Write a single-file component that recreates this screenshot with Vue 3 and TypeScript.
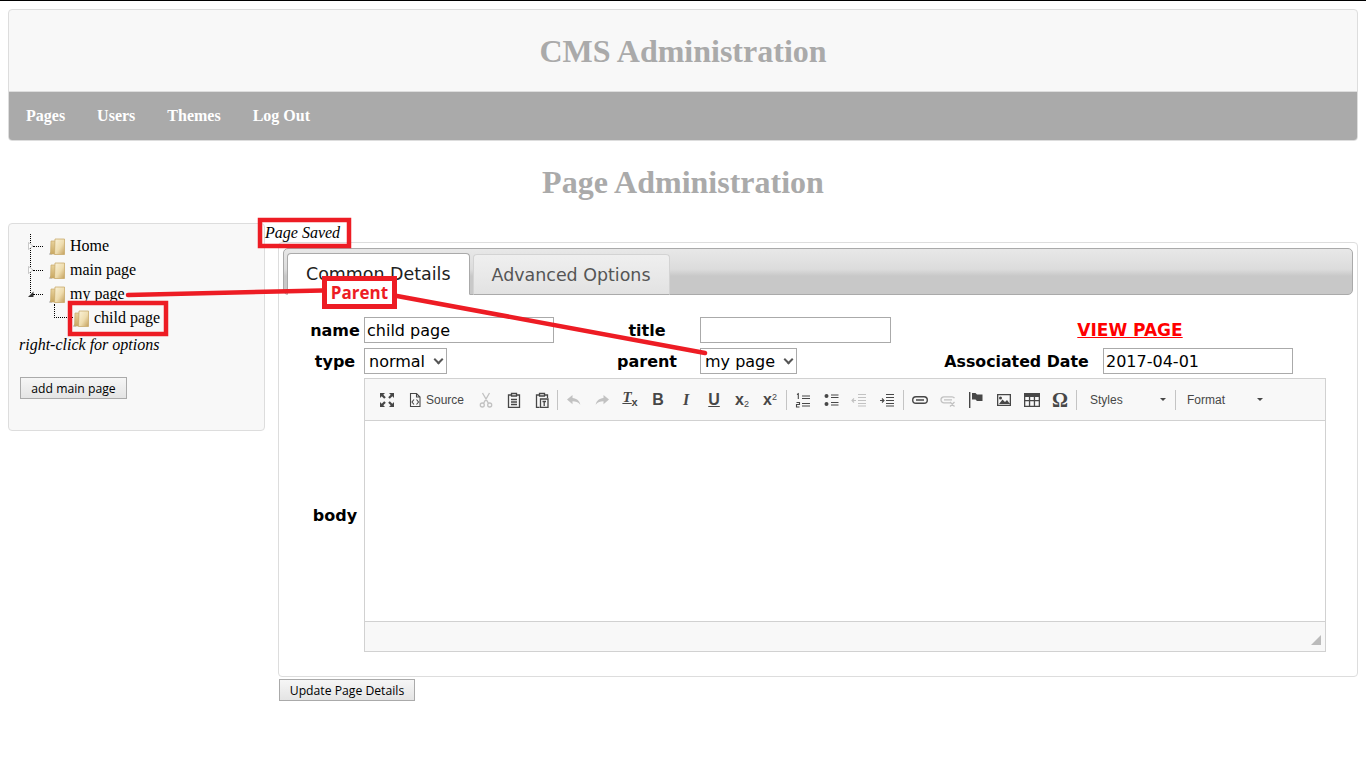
<script setup lang="ts">
interface Ic { f?: string; s?: string; t?: string; sub?: string; sup?: string; cls?: string; off?: boolean; label?: string }
const tools: (Ic | 'sep' | 'sep4' | string)[] = [
  { f: 'M1 1h5L4.3 2.7l2.5 2.5-1.6 1.6-2.5-2.5L1 6zM15 1v5l-1.7-1.7-2.5 2.5-1.6-1.6 2.5-2.5L10 1zM1 15v-5l1.7 1.700 2.500-2.500 1.600 1.600-2.500 2.500L6 15zM15 15h-5l1.700-1.700-2.500-2.500 1.600-1.600 2.500 2.500L15 10z' },
  { s: 'M3.500 1.500h6l3.500 3.500v9.500h-9.500zM9.500 1.500v3.500H13M7 7.500 5 10l2 2.500M9.500 7.500l2 2.500-2 2.500', label: 'Source' },
  { s: 'M5.800 10.800 11.500 1M10.200 10.800 4.500 1M6.300 13a2 2 0 1 1-4 0 2 2 0 0 1 4 0zM13.700 13a2 2 0 1 1-4 0 2 2 0 0 1 4 0z', off: true, cls: 'thick' },
  { s: 'M5 3H2.500v12.500h11V3H11M5.500 1.500h5V4h-5zM5 7.500h6M5 10h6M5 12.500h6', cls: 'thick' },
  { s: 'M5 3H2.500v12.500h3M11 3h2.500v3M5.500 1.500h5V4h-5zM6.500 7h7.500v8.500H6.500zM8.500 9.500h3.500M10.200 9.500v4.500', cls: 'thick' },
  'sep4',
  { f: 'M6.500 3 1 7.600l5.500 4.600V9.300c3.300 0 5.800.7 7.800 3.400C13.600 8.700 10.700 6.400 6.500 6z', off: true },
  { f: 'M9.500 3 15 7.600 9.500 12.200V9.300c-3.300 0-5.800.7-7.800 3.400C2.400 8.700 5.300 6.400 9.500 6z', off: true },
  { t: 'T', sub: 'x', cls: 'tclear' },
  { t: 'B', cls: 'tb' },
  { t: 'I', cls: 'ti' },
  { t: 'U', cls: 'tu' },
  { t: 'x', sub: '2', cls: 'tx' },
  { t: 'x', sup: '2', cls: 'tx' },
  'sep',
  { s: 'M7 4h8M7 6.500h8M7 11.500h8M7 14h8M2 2.500l1.300-.8V7M1.500 10.500h3v2h-3V15h3' },
  { f: 'M1.500 4a2 2 0 1 1 4 0 2 2 0 0 1-4 0zM1.500 12a2 2 0 1 1 4 0 2 2 0 0 1-4 0z', s: 'M8 3h7.500M8 5.500h7.500M8 10.500h7.500M8 13h7.500' },
  { s: 'M7 2.500h8M7 5.500h8M7 8.500h8M7 11.500h8M7 14h8M1 8.500h4M3 6.500 1 8.500l2 2', off: true },
  { s: 'M7 2.500h8M7 5.500h8M7 8.500h8M7 11.500h8M7 14h8M1 8.500h4M3 6.500l2 2-2 2' },
  'sep',
  { s: 'M5 4.700H4a3.300 3.300 0 0 0 0 6.600h8a3.300 3.300 0 0 0 0-6.600H5zM4 8h8', cls: 'thick2' },
  { s: 'M11 10.800H4a3 3 0 0 1 0-6h8a3 3 0 0 1 2.500 1.300M4 7.800h8M10 10l4.500 4.500M14.500 10 10 14.500', off: true, cls: 'thick' },
  { f: 'M1 0h1.400v16H1zM4 1h3.500L9 2.500h5.500V9H9L7.500 7.500H4z' },
  { f: 'M1 2h14v12H1zm1.300 1.300v9.400h11.400V3.300zM3 12l3.500-4.500L9 10l2-2 3 4zM4.500 4.500a1.500 1.500 0 1 1 0 3 1.500 1.500 0 0 1 0-3z' },
  { f: 'M0 1h16v14H0zm1.300 4v3h3.600V5zm4.900 0v3h3.600V5zm4.900 0v3h3.600V5zM1.300 9.300v4.400h3.600V9.300zm4.900 0v4.400h3.600V9.300zm4.900 0v4.400h3.600V9.300z' },
  { t: 'Ω', cls: 'tomega' },
  'sep',
  'Styles',
  'sep',
  'Format'
]
const isSep = (t: unknown) => t === 'sep' || t === 'sep4'
const isCombo = (t: unknown) => typeof t === 'string' && !isSep(t)
const tree = [
  { name: 'Home', arrow: 'open' },
  { name: 'main page', arrow: 'open' },
  { name: 'my page', arrow: 'down' }
]
</script>

<template>
  <div class="page">
    <header class="head">
      <h1 class="brand">CMS Administration</h1>
      <nav class="nav">
        <a>Pages</a><a>Users</a><a>Themes</a><a>Log Out</a>
      </nav>
    </header>
    <h2 class="title">Page Administration</h2>

    <div class="cols">
      <aside class="side">
        <svg class="defs" width="0" height="0">
          <defs>
            <linearGradient id="fg" x1="0" y1="0" x2="1" y2="1">
              <stop offset="0" stop-color="#fbf3da" />
              <stop offset=".55" stop-color="#eedcae" />
              <stop offset="1" stop-color="#c39f5c" />
            </linearGradient>
            <linearGradient id="fl" x1="0" y1="0" x2="0" y2="1">
              <stop offset="0" stop-color="#e8d29c" />
              <stop offset="1" stop-color="#c9a862" />
            </linearGradient>
            <g id="fold">
              <path d="M0 16.500 1.500 14 3 16.500z" fill="#9a9a9a" />
              <path d="M2 3h5v13H1.500z" fill="url(#fl)" stroke="#c9ab6c" stroke-width=".7" />
              <path d="M6 1h9.500v15.500H5.500z" fill="url(#fg)" stroke="#c9ab6c" stroke-width=".8" />
            </g>
          </defs>
        </svg>
        <ul class="tree">
          <li v-for="n in tree" :key="n.name" class="node">
            <svg class="arrow" viewBox="0 0 6 8" :class="n.arrow">
              <path v-if="n.arrow === 'open'" d="M.5.5 5 4 .5 7.500z" fill="#fff" stroke="#bbb" stroke-width=".8" />
              <path v-else d="M0 7 5.500 1.500V7z" fill="#333" />
            </svg>
            <span class="dash"></span>
            <svg class="folder" viewBox="0 0 17 17"><use href="#fold" /></svg>
            <span>{{ n.name }}</span>
          </li>
          <li class="node child">
            <span class="elbow"></span>
            <svg class="folder" viewBox="0 0 17 17"><use href="#fold" /></svg>
            <span>child page</span>
          </li>
        </ul>
        <p class="hint">right-click for options</p>
        <button class="btn add">add main page</button>
      </aside>

      <main class="main">
        <em class="saved">Page Saved</em>
        <section class="panel">
          <div class="tabs">
            <a class="tab on">Common Details</a>
            <a class="tab">Advanced Options</a>
          </div>
          <form class="form" @submit.prevent>
            <label class="lbl">name</label>
            <div><input class="field nm" value="child page" /></div>
            <label class="lbl">title</label>
            <div><input class="field ttl" /></div>
            <a class="view">VIEW PAGE</a>

            <label class="lbl">type</label>
            <div class="selwrap w1"><select class="field sel"><option>normal</option></select></div>
            <label class="lbl">parent</label>
            <div class="selwrap w2"><select class="field sel"><option>my page</option></select></div>
            <label class="lbl assoc">Associated Date</label>
            <div><input class="field dt" value="2017-04-01" /></div>

            <label class="lbl bodylbl">body</label>
            <div class="editor">
              <div class="toolbar">
                <template v-for="(t, i) in tools" :key="i">
                  <span v-if="isSep(t)" class="sep" :class="t"></span>
                  <span v-else-if="isCombo(t)" class="combo" :class="t">
                    <span>{{ t }}</span><i class="caret"></i>
                  </span>
                  <span v-else class="tool" :class="[{ off: (t as Ic).off }, (t as Ic).t ? '' : (t as Ic).cls]">
                    <svg v-if="!(t as Ic).t" class="ico" viewBox="0 0 16 16">
                      <path v-if="(t as Ic).f" :d="(t as Ic).f" fill="#474747" />
                      <path v-if="(t as Ic).s" :d="(t as Ic).s" fill="none" stroke="#474747" />
                    </svg>
                    <span v-else class="glyph" :class="(t as Ic).cls">{{ (t as Ic).t }}<sub v-if="(t as Ic).sub">{{ (t as Ic).sub }}</sub><sup v-if="(t as Ic).sup">{{ (t as Ic).sup }}</sup></span>
                    <span v-if="(t as Ic).label" class="tlabel">{{ (t as Ic).label }}</span>
                  </span>
                </template>
              </div>
              <div class="content"></div>
              <div class="foot"><i class="grip"></i></div>
            </div>
          </form>
        </section>
        <button class="btn upd">Update Page Details</button>
      </main>
    </div>

    <svg class="marks" width="1366" height="768" viewBox="0 0 1366 768">
      <path d="M128 295 322 290.500M397 296 705 353" fill="none" stroke="#ed1c24" stroke-width="4.500" stroke-linecap="round" />
      <rect x="260" y="220" width="89" height="26" fill="none" stroke="#ed1c24" stroke-width="4.500" />
      <rect x="70" y="303" width="96" height="31" fill="none" stroke="#ed1c24" stroke-width="4.500" />
    </svg>
    <span class="parent-tag">Parent</span>
  </div>
</template>

<style>
html, body { margin: 0; background: #fff; }
</style>

<style scoped>
.page { position: relative; width: 1366px; height: 768px; overflow: hidden; box-sizing: border-box; border-top: 1px solid #000; padding: 8px 8px 0; font-family: "Liberation Serif", serif; color: #000; }
.head { border: 1px solid #ddd; border-radius: 4px; background: #f8f8f8; box-sizing: border-box; width: 1350px; height: 132px; display: flex; flex-direction: column; overflow: hidden; }
.brand { margin: 0; height: 81px; line-height: 82px; text-align: center; font-size: 32px; font-weight: bold; color: #aaa; border-bottom: 1px solid #ddd; }
.nav { flex: 1; background: #aaa; display: flex; align-items: center; padding-left: 1px; }
.nav a { padding: 0 16px; color: #fff; font-weight: bold; font-size: 16px; }
.title { margin: 25px 0 0; height: 34px; line-height: 33px; text-align: center; font-size: 32px; font-weight: bold; color: #aaa; }
.cols { display: flex; align-items: flex-start; margin-top: 23px; }
.side { width: 257px; height: 208px; box-sizing: border-box; border: 1px solid #ddd; border-radius: 4px; background: #f8f8f8; padding: 10px 10px 0; flex: none; }
.defs { position: absolute; }
.tree { list-style: none; margin: 0; padding: 0; font-size: 16px; position: relative; }
.tree::before { content: ""; position: absolute; left: 11px; top: 0; height: 59px; border-left: 1px dotted #000; }
.node { display: flex; align-items: center; height: 24px; position: relative; }
.arrow { position: absolute; left: 9px; top: 8px; width: 6px; height: 8px; }
.dash { position: absolute; left: 14px; top: 12px; width: 10px; border-top: 1px dotted #000; }
.folder { width: 17px; height: 17px; margin: 0 4px 0 30px; flex: none; }
.child .folder { margin-left: 54px; }
.elbow { position: absolute; left: 35px; top: -2px; width: 18px; height: 13px; border-left: 1px dotted #000; border-bottom: 1px dotted #000; }
.hint { margin: 6px 0 0; font-style: italic; font-size: 16px; line-height: 18px; }
.btn { display: block; box-sizing: border-box; height: 22px; padding: 0; border: 1px solid #aaa; background: linear-gradient(#f6f6f6, #e4e4e4); font-family: "Open Sans", sans-serif; font-size: 12.200px; color: #000; }
.add { width: 107px; margin: 23px 0 0 1px; }
.upd { width: 136px; margin: 2px 0 0 1px; }
.main { margin-left: 13px; width: 1080px; flex: none; }
.saved { display: block; height: 19px; line-height: 20px; margin-left: -13px; font-size: 16px; }
.panel { box-sizing: border-box; height: 435px; border: 1px solid #ddd; border-radius: 4px; padding: 5px 4px 0; }
.tabs { box-sizing: border-box; height: 47px; border: 1px solid #aaa; border-radius: 5px; background: linear-gradient(#e8e8e8, #dcdcdc 45%, #c8c8c8 60%, #c8c8c8); padding: 5px 0 0 3px; display: flex; gap: 3px; align-items: flex-end; }
.tab { box-sizing: border-box; height: 41px; margin-bottom: -1px; padding: 0 18px; line-height: 40px; font-family: "DejaVu Sans", sans-serif; font-size: 17.450px; color: #555; border: 1px solid #d3d3d3; border-bottom-color: #aaa; border-radius: 4px 4px 0 0; background: linear-gradient(#efefef, #e9e9e9 50%, #e2e2e2); }
.tab.on { height: 42px; background: #fff; color: #212121; border-color: #aaa; border-bottom-color: #fff; }
.form { display: grid; grid-template-columns: 58px 230px 106px 240px 163px 217px; grid-template-rows: 26px 26px 274px; row-gap: 5px; margin: 22px 0 0 23px; font-family: "DejaVu Sans", sans-serif; }
.form > :nth-child(n+13) { margin-top: -1px; }
.lbl { font-weight: bold; font-size: 16px; text-align: center; line-height: 28px; white-space: nowrap; }
.assoc { font-size: 15.800px; margin-left: -10px; }
.bodylbl { align-self: center; }
.view { grid-column: 5 / span 2; text-align: center; color: #f00; font-weight: bold; font-size: 17px; line-height: 27px; text-decoration: underline; }
.field { box-sizing: border-box; height: 26px; border: 1px solid #aaa; background: #fff; font-family: "DejaVu Sans", sans-serif; font-size: 16px; color: #000; padding: 0 2px; margin: 0; display: block; border-radius: 0; }
.nm { width: 190px; }
.ttl { width: 191px; }
.dt { width: 190px; }
.selwrap { position: relative; }
.selwrap::after { content: ""; position: absolute; top: 8px; width: 5px; height: 5px; border-right: 2px solid #555; border-bottom: 2px solid #555; transform: rotate(45deg); pointer-events: none; }
.w1::after { left: 71px; }
.w2::after { left: 85px; }
.sel { appearance: none; padding: 0 0 0 4px; }
.w1 .sel { width: 83px; }
.w2 .sel { width: 97px; }
.editor { grid-column: 2 / span 5; box-sizing: border-box; width: 962px; height: 274px; border: 1px solid #d1d1d1; display: flex; flex-direction: column; }
.toolbar { height: 42px; flex: none; box-sizing: border-box; background: #f8f8f8; border-bottom: 1px solid #d1d1d1; display: flex; align-items: center; padding-left: 8px; font-family: "Liberation Sans", sans-serif; color: #474747; }
.tool { height: 28px; display: flex; align-items: center; padding: 0 6px; flex: none; min-width: 16px; justify-content: center; }
.tool.off { opacity: .3; }
.ico { width: 16px; height: 16px; flex: none; }
.ico path { stroke-width: 1.100; }
.thick .ico path { stroke-width: 1.300; }
.thick2 .ico path { stroke-width: 1.400; }
.tlabel { font-size: 12px; margin-left: 3px; margin-right: 2px; }
.sep { width: 1px; height: 20px; background: #c4c4c4; margin: 0 2px; flex: none; }
.sep4 { margin: 0 2px 0 1px; }
.combo { width: 94px; box-sizing: border-box; font-size: 12px; display: flex; align-items: center; justify-content: space-between; flex: none; }
.Styles { padding: 0 7px 0 11px; }
.Format { padding: 0 9px 0 9px; }
.caret { border-top: 3px solid #474747; border-left: 3px solid transparent; border-right: 3px solid transparent; }
.glyph { display: inline-block; width: 16px; text-align: center; line-height: 16px; font-size: 16px; white-space: nowrap; }
.tb { font-weight: bold; font-family: "Liberation Sans", sans-serif; }
.ti { font-weight: bold; font-style: italic; font-family: "Liberation Serif", serif; }
.tu { font-weight: bold; text-decoration: underline; }
.tclear { font-weight: bold; font-style: italic; font-size: 15px; text-decoration: underline; font-family: "Liberation Serif", serif; }
.tclear sub { font-size: 11px; font-style: normal; font-family: "Liberation Sans", sans-serif; }
.tx { font-weight: bold; font-size: 16px; }
.tx sub { font-size: 9px; font-weight: normal; line-height: 0; vertical-align: -2px; }
.tx sup { font-size: 9px; font-weight: normal; line-height: 0; vertical-align: 5px; }
.tomega { font-family: "Liberation Serif", serif; font-size: 20px; font-weight: bold; }
.content { flex: 1; background: #fff; }
.foot { height: 30px; flex: none; background: #f8f8f8; border-top: 1px solid #d1d1d1; position: relative; box-sizing: border-box; }
.grip { position: absolute; right: 4px; bottom: 6px; width: 0; height: 0; border-bottom: 10px solid #bbb; border-left: 10px solid transparent; }
.marks { position: absolute; left: 0; top: -1px; pointer-events: none; }
.parent-tag { position: absolute; left: 322px; top: 275px; box-sizing: border-box; width: 75px; height: 33px; border: 5px solid #ed1c24; background: #fff; color: #ed1c24; font-family: "Open Sans", sans-serif; font-weight: bold; font-size: 17px; line-height: 24px; text-align: center; }
</style>
